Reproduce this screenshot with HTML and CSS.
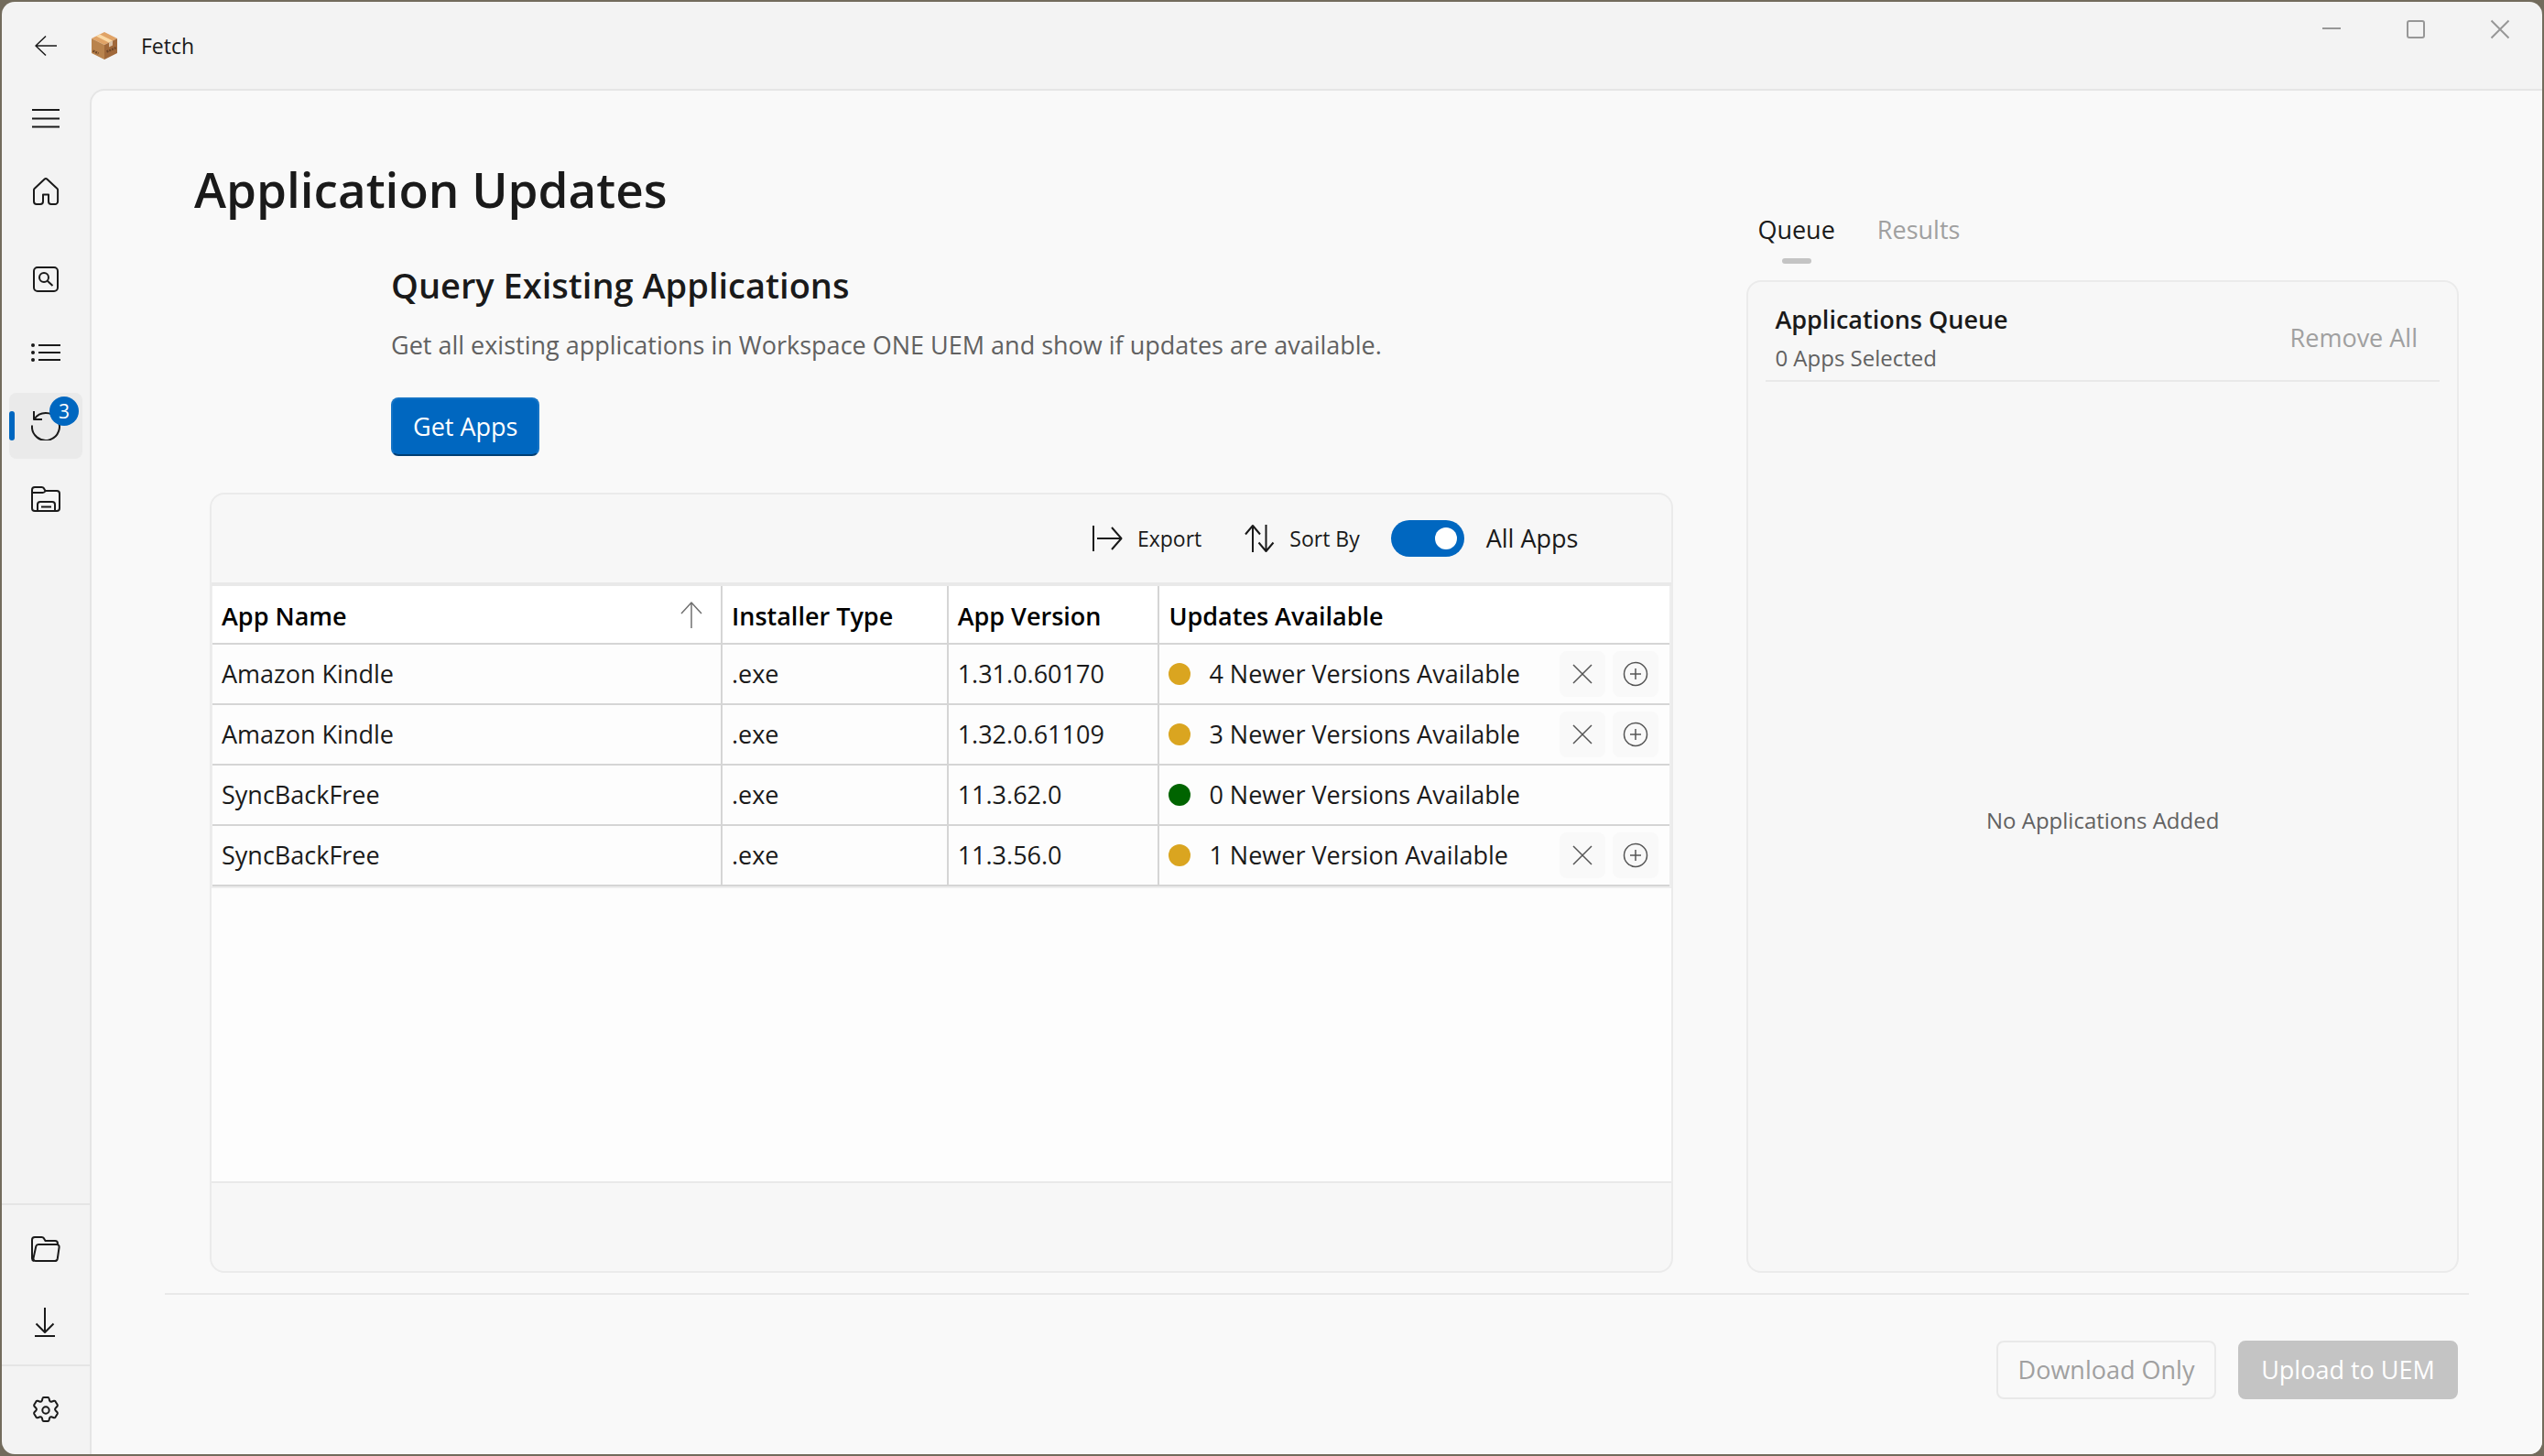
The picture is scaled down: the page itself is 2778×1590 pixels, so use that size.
FILE: index.html
```html
<!DOCTYPE html>
<html lang="en">
<head>
<meta charset="utf-8">
<title>Fetch</title>
<link rel="stylesheet" href="styles.css">
</head>
<body>
<div class="window">
  <header class="titlebar">
    <button class="back" aria-label="Back">
      <svg class="icon thin" width="32" height="32" viewBox="0 0 32 32"><path d="M28 16H5M16 5.500 5 16l11 10.500"/></svg>
    </button>
    <svg class="logo" width="28" height="30" viewBox="0 0 28 30">
      <path fill="#e0a366" d="M14 0 28 7 14 14 0 7z"/>
      <path fill="#b9834d" d="M0 7l14 7v16L0 23z"/>
      <path fill="#a0683a" d="M28 7l-14 7v16l14-7z"/>
      <path fill="#fbd9a5" d="M9 2.500 5 4.500 19 11.500 23 9.500z"/>
      <path fill="#d9c0a4" d="M19 11.500 23 9.500v5l-4 2z"/>
      <path stroke="#6f4728" stroke-width="2.500" stroke-dasharray="2 1" d="M16.500 21.500 27 17M1.500 20.500 7.500 23.500"/>
    </svg>
    <span class="app-name">Fetch</span>
    <div class="caption">
      <button aria-label="Minimize"><svg class="icon" width="24" height="24" viewBox="0 0 24 24"><path d="M2 11h20"/></svg></button>
      <button aria-label="Maximize"><svg class="icon" width="24" height="24" viewBox="0 0 24 24"><rect x="3" y="3" width="18" height="18" rx="2"/></svg></button>
      <button aria-label="Close"><svg class="icon" width="24" height="24" viewBox="0 0 24 24"><path d="M2.500 2.500l19 19M21.500 2.500l-19 19"/></svg></button>
    </div>
  </header>
  <div class="body">
    <nav class="sidebar" aria-label="Main">
      <div class="nav-group">
        <button class="nav-item" aria-label="Menu"><svg class="icon" width="32" height="32" viewBox="0 0 32 32"><path d="M1 7h30M1 16.500h30M1 25.500h30"/></svg></button>
        <a class="nav-item" href="#home" aria-label="Home"><svg class="icon" width="32" height="32" viewBox="0 0 32 32"><path d="M14.500 2.700a2.200 2.200 0 0 1 3 0l11 10.300a2 2 0 0 1 .6 1.500V27a3 3 0 0 1-3 3H22a3 3 0 0 1-3-3v-7.400h-6V27a3 3 0 0 1-3 3H6a3 3 0 0 1-3-3V14.500a2 2 0 0 1 .6-1.500z"/></svg></a>
      </div>
      <div class="nav-group nav-tools">
        <a class="nav-item" href="#search" aria-label="Search"><svg class="icon" width="32" height="32" viewBox="0 0 32 32"><rect x="3" y="3" width="26" height="26" rx="4"/><circle cx="14" cy="14" r="5"/><path d="M17.800 17.800l5.700 5.200"/></svg></a>
        <a class="nav-item" href="#list" aria-label="List"><svg class="icon" width="32" height="32" viewBox="0 0 32 32"><path d="M8 8h24M8 16h24M8 24h24"/><g fill="currentColor" stroke="none"><circle cx="2" cy="8" r="2"/><circle cx="2" cy="16" r="2"/><circle cx="2" cy="24" r="2"/></g></svg></a>
        <a class="nav-item active" href="#updates" aria-label="Updates"><svg class="icon" width="32" height="32" viewBox="0 0 32 32"><path d="M3 0v9h9M3.500 8.500a15 15 0 1 1-2.500 7"/></svg><span class="badge">3</span></a>
        <a class="nav-item" href="#packages" aria-label="Packages"><svg class="icon" width="32" height="32" viewBox="0 0 32 32"><path d="M1 9V6a3 3 0 0 1 3-3h7.500a3 3 0 0 1 2.500 1.400L15.500 7H28a3 3 0 0 1 3 3v16a3 3 0 0 1-3 3H4a3 3 0 0 1-3-3zM1 9h11.500a3 3 0 0 0 3-2M7 29v-7a3 3 0 0 1 3-3h13a3 3 0 0 1 3 3v7M11 24.500h11"/></svg></a>
      </div>
      <div class="nav-group nav-files">
        <a class="nav-item" href="#open" aria-label="Open folder"><svg class="icon" width="32" height="32" viewBox="0 0 32 32"><path d="M3 29a3 3 0 0 1-2-2.800V6a3 3 0 0 1 3-3h7.500a3 3 0 0 1 2.500 1.400L15.500 7H26a3 3 0 0 1 3 3v1M8 11h20a2.600 2.600 0 0 1 2.600 3l-1.800 12.500a3 3 0 0 1-3 2.500H5a2.600 2.600 0 0 1-2.500-3L5.300 13A2.800 2.800 0 0 1 8 11z"/></svg></a>
        <a class="nav-item" href="#downloads" aria-label="Downloads"><svg class="icon" width="32" height="32" viewBox="0 0 32 32"><path d="M15 0v27M5.500 17.500l9.500 9.500L24.500 17.500M4 31h22"/></svg></a>
      </div>
      <div class="nav-group nav-settings">
        <a class="nav-item" href="#settings" aria-label="Settings"><svg class="icon" width="32" height="32" viewBox="0 0 32 32"><circle cx="16" cy="16" r="3.700"/><path d="M13.700 2h4.600q1 0 1.200 1l.6 2.400q.5 1.600 2.100 1.300l2.700-.9q1-.3 1.600.6l2.200 3.700q.5.900-.2 1.700l-1.900 1.900q-1.200 1.300 0 2.600l1.900 1.900q.7.800.2 1.700l-2.200 3.700q-.6.900-1.600.6l-2.700-.9q-1.600-.3-2.100 1.300l-.6 2.400q-.2 1-1.200 1h-4.600q-1 0-1.200-1l-.6-2.400q-.5-1.600-2.100-1.300l-2.700.9q-1 .3-1.600-.6l-2.200-3.700q-.5-.9.200-1.700l1.900-1.900q1.200-1.300 0-2.600l-1.900-1.900q-.7-.8-.2-1.700l2.200-3.700q.6-.9 1.600-.6l2.700.9q1.600.3 2.100-1.300l.6-2.400q.2-1 1.200-1z"/></svg></a>
      </div>
    </nav>
    <main class="main">
      <div class="columns">
        <section class="updates">
          <h1>Application Updates</h1>
          <div class="query">
            <h2>Query Existing Applications</h2>
            <p>Get all existing applications in Workspace ONE UEM and show if updates are available.</p>
            <button class="btn primary">Get Apps</button>
          </div>
          <div class="card apps">
            <div class="toolbar">
              <button class="tool"><svg class="icon" width="34" height="32" viewBox="0 0 34 32"><path d="M2 2v28M6 16h26M22 4l10.500 12L22 28"/></svg>Export</button>
              <button class="tool"><svg class="icon" width="34" height="32" viewBox="0 0 34 32"><path d="M10 31V2M2 11.500 10 2l8 9.500M24.500 1v29M16.500 20.500l8 9.500 8-9.500"/></svg>Sort By</button>
              <label class="switch"><input type="checkbox" checked>All Apps</label>
            </div>
            <div class="table-area">
              <table>
                <colgroup><col class="c-name"><col class="c-type"><col class="c-version"><col class="c-updates"></colgroup>
                <thead>
                  <tr>
                    <th scope="col"><div class="cell">App Name<svg class="icon sort" width="24" height="30" viewBox="0 0 24 30"><path d="M12 30V2M1 14 12 2l11 12"/></svg></div></th>
                    <th scope="col">Installer Type</th>
                    <th scope="col">App Version</th>
                    <th scope="col">Updates Available</th>
                  </tr>
                </thead>
                <tbody>
                  <tr><td>Amazon Kindle</td><td>.exe</td><td>1.31.0.60170</td><td><div class="cell"><span class="dot"></span>4 Newer Versions Available
                    <span class="actions"><button aria-label="Dismiss"><svg class="icon thin" width="28" height="28" viewBox="0 0 28 28"><path d="M4 4l20 20M24 4 4 24"/></svg></button><button aria-label="Add"><svg class="icon thin" width="28" height="28" viewBox="0 0 28 28"><circle cx="14" cy="14" r="12.500"/><path d="M14 8v12M8 14h12"/></svg></button></span></div></td></tr>
                  <tr><td>Amazon Kindle</td><td>.exe</td><td>1.32.0.61109</td><td><div class="cell"><span class="dot"></span>3 Newer Versions Available
                    <span class="actions"><button aria-label="Dismiss"><svg class="icon thin" width="28" height="28" viewBox="0 0 28 28"><path d="M4 4l20 20M24 4 4 24"/></svg></button><button aria-label="Add"><svg class="icon thin" width="28" height="28" viewBox="0 0 28 28"><circle cx="14" cy="14" r="12.500"/><path d="M14 8v12M8 14h12"/></svg></button></span></div></td></tr>
                  <tr><td>SyncBackFree</td><td>.exe</td><td>11.3.62.0</td><td><div class="cell"><span class="dot ok"></span>0 Newer Versions Available</div></td></tr>
                  <tr><td>SyncBackFree</td><td>.exe</td><td>11.3.56.0</td><td><div class="cell"><span class="dot"></span>1 Newer Version Available
                    <span class="actions"><button aria-label="Dismiss"><svg class="icon thin" width="28" height="28" viewBox="0 0 28 28"><path d="M4 4l20 20M24 4 4 24"/></svg></button><button aria-label="Add"><svg class="icon thin" width="28" height="28" viewBox="0 0 28 28"><circle cx="14" cy="14" r="12.500"/><path d="M14 8v12M8 14h12"/></svg></button></span></div></td></tr>
                </tbody>
              </table>
            </div>
            <div class="card-foot"></div>
          </div>
        </section>
        <aside class="side">
          <div class="tabs" role="tablist">
            <button class="tab" role="tab" aria-selected="true">Queue</button>
            <button class="tab" role="tab" aria-selected="false" disabled>Results</button>
          </div>
          <div class="card queue">
            <div class="queue-head">
              <div>
                <h3>Applications Queue</h3>
                <p>0 Apps Selected</p>
              </div>
              <button class="remove" disabled>Remove All</button>
            </div>
            <div class="empty">No Applications Added</div>
          </div>
        </aside>
      </div>
      <footer class="actions-bar">
        <button class="btn" disabled>Download Only</button>
        <button class="btn primary" disabled>Upload to UEM</button>
      </footer>
    </main>
  </div>
</div>
</body>
</html>
```
FILE: styles.css
```css
:root {
  --text: #1a1a1a;
  --muted: #616161;
  --disabled: #a0a0a0;
  --line: #e9e9e9;
  --grid: #d5d5d5;
  --accent: #0067c0;
}

* { box-sizing: border-box; }

body {
  margin: 0;
  min-height: 100vh;
  padding: 2px;
  display: flex;
  background: #726b5c;
  color: var(--text);
  font: 27px/36px "Open Sans", "Noto Sans", sans-serif;
}

h1, h2, h3, p { margin: 0; font-weight: 600; }

button {
  font: inherit;
  color: inherit;
  background: none;
  border: 0;
  padding: 0;
}

.icon {
  display: block;
  flex: none;
  fill: none;
  stroke: currentColor;
  stroke-width: 2;
  stroke-linejoin: round;
}

.icon.thin { stroke-width: 1.5; }

.window {
  flex: 1;
  display: flex;
  flex-direction: column;
  border-radius: 14px;
  overflow: hidden;
  background: #f3f3f3;
}

/* Title bar */
.titlebar {
  display: flex;
  align-items: center;
  height: 95px;
  padding-left: 32px;
}

.logo { margin-left: 34px; }

.app-name {
  margin-left: 26px;
  font-size: 23px;
  line-height: 32px;
}

.caption {
  display: flex;
  align-self: flex-start;
  margin-left: auto;
  color: #979797;
}

.caption button {
  display: grid;
  place-items: center;
  width: 92px;
  height: 60px;
}

/* Sidebar */
.body { flex: 1; display: flex; }

.sidebar {
  display: flex;
  flex-direction: column;
  width: 96px;
  margin-top: -4px;
}

.nav-group {
  display: flex;
  flex-direction: column;
  align-items: center;
  gap: 8px;
}

.nav-item {
  position: relative;
  display: grid;
  place-items: center;
  width: 80px;
  height: 72px;
  border-radius: 8px;
  color: inherit;
  text-decoration: none;
}

.nav-item.active { background: #eaeaea; }

.nav-item.active::before {
  content: "";
  position: absolute;
  left: 0;
  top: 20px;
  width: 6px;
  height: 32px;
  border-radius: 3px;
  background: var(--accent);
}

.badge {
  position: absolute;
  top: 4px;
  right: 4px;
  width: 32px;
  border-radius: 50%;
  background: var(--accent);
  color: #fff;
  font-size: 21px;
  line-height: 32px;
  text-align: center;
}

.nav-tools { margin-top: 24px; }
.nav-files { margin-top: auto; padding: 12px 0 10px; border-top: 2px solid #e5e5e5; }
.nav-settings { padding: 12px 0; border-top: 2px solid #e5e5e5; }

/* Main */
.main {
  flex: 1;
  min-width: 0;
  display: flex;
  flex-direction: column;
  padding: 0 80px 60px;
  border: solid #e5e5e5;
  border-width: 2px 0 0 2px;
  border-top-left-radius: 16px;
  background: #f9f9f9;
}

.columns {
  flex: 1;
  display: grid;
  grid-template-columns: minmax(0, 37fr) minmax(0, 18fr);
  gap: 80px;
  padding: 72px 11px 22px 49px;
}

.updates, .side { display: flex; flex-direction: column; }
.updates h1 { margin-left: -17px; font-size: 53px; line-height: 72px; }

.query { margin: 42px 0 40px 198px; }
.query h2 { font-size: 38px; line-height: 52px; }
.query p { margin: 22px 0 39px; font-weight: 400; color: var(--muted); }

.btn {
  height: 64px;
  padding: 0 22px;
  border: 2px solid var(--line);
  border-radius: 8px;
}

.btn.primary {
  border-color: #1473c5 #1473c5 #003e73;
  background: var(--accent);
  color: #fff;
}

.btn:disabled { min-width: 240px; padding: 0 16px; color: var(--disabled); }
.btn.primary:disabled { border-color: #c4c4c4; background: #c4c4c4; color: #fff; }

.card {
  flex: 1;
  display: flex;
  flex-direction: column;
  border: 2px solid #ebebeb;
  border-radius: 16px;
  background: #f7f7f7;
  overflow: hidden;
}

/* Applications table */
.toolbar {
  display: flex;
  align-items: center;
  justify-content: flex-end;
  gap: 34px;
  height: 96px;
  padding-right: 102px;
}

.tool {
  display: flex;
  align-items: center;
  gap: 16px;
  padding-left: 12px;
  font-size: 23px;
  line-height: 32px;
}

.switch { display: flex; align-items: center; gap: 24px; }

.switch input {
  appearance: none;
  display: flex;
  align-items: center;
  justify-content: flex-end;
  width: 80px;
  height: 40px;
  margin: 0;
  padding: 0 8px;
  border-radius: 20px;
  background: var(--accent);
}

.switch input::before {
  content: "";
  width: 24px;
  height: 24px;
  border-radius: 50%;
  background: #fff;
}

.switch input:not(:checked) { justify-content: flex-start; background: #8a8a8a; }

.table-area {
  flex: 1;
  border-top: 4px solid var(--line);
  border-bottom: 2px solid var(--line);
  background: #fdfdfd;
}

table {
  width: 100%;
  table-layout: fixed;
  border-spacing: 0;
  border: solid #eee;
  border-width: 0 2px 2px 1px;
}

.c-name, .c-updates { width: 35%; }
.c-type { width: 15.5%; }
.c-version { width: 14.5%; }

th, td {
  height: 66px;
  padding: 0 10px;
  border: solid var(--grid);
  border-width: 0 2px 2px 0;
  text-align: left;
}

th { height: 64px; padding-top: 4px; background: #fff; color: #000; font-weight: 600; }
th:last-child, td:last-child { border-right: 0; }

.cell { display: flex; align-items: center; }
.sort { margin: 0 10px 4px auto; color: #707070; stroke-width: 1.5; }

.dot {
  width: 24px;
  height: 24px;
  margin-right: 20px;
  border-radius: 50%;
  background: #daa520;
}

.dot.ok { background: #006400; }

.actions { display: flex; gap: 8px; margin-left: auto; margin-right: 2px; }

.actions button {
  display: grid;
  place-items: center;
  width: 50px;
  height: 50px;
  border-radius: 8px;
  background: #f9f9f9;
  color: #555;
}

.card-foot { height: 96px; }

/* Queue panel */
.side { padding-top: 62px; }

.tabs { display: flex; gap: 46px; margin: 0 0 18px 12px; }
.tab:disabled, .remove:disabled { color: var(--disabled); }

.tab::after {
  content: "";
  display: block;
  width: 32px;
  height: 6px;
  margin: 13px auto 0;
  border-radius: 3px;
}

.tab[aria-selected="true"]::after { background: #c4c4c4; }

.queue { padding: 23px 19px 0; }

.queue-head {
  display: flex;
  align-items: center;
  justify-content: space-between;
  padding: 0 24px 8px 10px;
  border-bottom: 2px solid var(--line);
}

.queue-head h3 { font-size: 27px; }
.queue-head p { margin-top: 8px; font-size: 24px; line-height: 32px; font-weight: 400; color: var(--muted); }

.empty {
  flex: 1;
  display: grid;
  place-items: center;
  padding-bottom: 14px;
  font-size: 24px;
  line-height: 32px;
  color: var(--muted);
}

.actions-bar {
  display: flex;
  justify-content: flex-end;
  gap: 24px;
  padding: 50px 12px 0;
  border-top: 2px solid var(--line);
}
```
